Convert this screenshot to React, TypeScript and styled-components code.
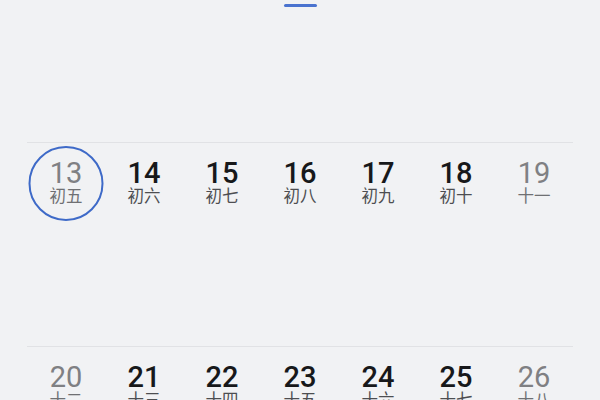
import styled, { createGlobalStyle } from "styled-components";

const GlobalStyle = createGlobalStyle`
  html, body {
    margin: 0;
    padding: 0;
    background: #f1f2f4;
  }
`;

type Day = { num: number; lunar: string; weekend?: boolean; today?: boolean };

const weeks: Day[][] = [
  [
    { num: 13, lunar: "初五", weekend: true, today: true },
    { num: 14, lunar: "初六" },
    { num: 15, lunar: "初七" },
    { num: 16, lunar: "初八" },
    { num: 17, lunar: "初九" },
    { num: 18, lunar: "初十" },
    { num: 19, lunar: "十一", weekend: true },
  ],
  [
    { num: 20, lunar: "十二", weekend: true },
    { num: 21, lunar: "十三" },
    { num: 22, lunar: "十四" },
    { num: 23, lunar: "十五" },
    { num: 24, lunar: "十六" },
    { num: 25, lunar: "十七" },
    { num: 26, lunar: "十八", weekend: true },
  ],
];

const App = () => {
  return (
    <>
      <GlobalStyle />
      <Page>
        <TabBar>
          <Indicator />
        </TabBar>
        <Weeks>
          {weeks.map((week, i) => (
            <Week key={i}>
              {week.map((d) => (
                <DayCell key={d.num}>
                  {d.today && <TodayRing />}
                  <Num $muted={!!d.weekend}>{d.num}</Num>
                  <Lunar $muted={!!d.weekend}>{d.lunar}</Lunar>
                </DayCell>
              ))}
            </Week>
          ))}
        </Weeks>
      </Page>
    </>
  );
};

export default App;

const Page = styled.div`
  width: 600px;
  height: 400px;
  overflow: hidden;
  background: #f1f2f4;
  display: flex;
  flex-direction: column;
`;

const TabBar = styled.div`
  flex-shrink: 0;
  height: 142px;
  display: flex;
  justify-content: center;
  align-items: flex-start;
  padding-top: 4px;
  box-sizing: border-box;
`;

const Indicator = styled.div`
  width: 33px;
  height: 2.5px;
  border-radius: 2px;
  background: #4a73cf;
`;

const Weeks = styled.div`
  flex-shrink: 0;
  display: flex;
  flex-direction: column;
  padding: 0 27px;
`;

const Week = styled.div`
  flex-shrink: 0;
  height: 203px;
  border-top: 1.5px solid #e1e2e5;
  display: grid;
  grid-template-columns: repeat(7, 1fr);
  align-items: start;
`;

const DayCell = styled.div`
  position: relative;
  display: flex;
  flex-direction: column;
  align-items: center;
  padding-top: 17px;
`;

const TodayRing = styled.div`
  position: absolute;
  top: 2.5px;
  left: 50%;
  transform: translateX(-50%);
  width: 71px;
  height: 71px;
  border: 2px solid #3e6ac8;
  border-radius: 50%;
`;

const Num = styled.div<{ $muted: boolean }>`
  font-family: Roboto, "Noto Sans", sans-serif;
  font-size: 29px;
  line-height: 26px;
  font-weight: ${(p) => (p.$muted ? 400 : 500)};
  color: ${(p) => (p.$muted ? "#7f8083" : "#17181a")};
`;

const Lunar = styled.div<{ $muted: boolean }>`
  font-family: "Noto Sans CJK SC", "Noto Sans", sans-serif;
  font-size: 16.5px;
  line-height: 19px;
  color: ${(p) => (p.$muted ? "#6f7073" : "#4d4e51")};
`;
